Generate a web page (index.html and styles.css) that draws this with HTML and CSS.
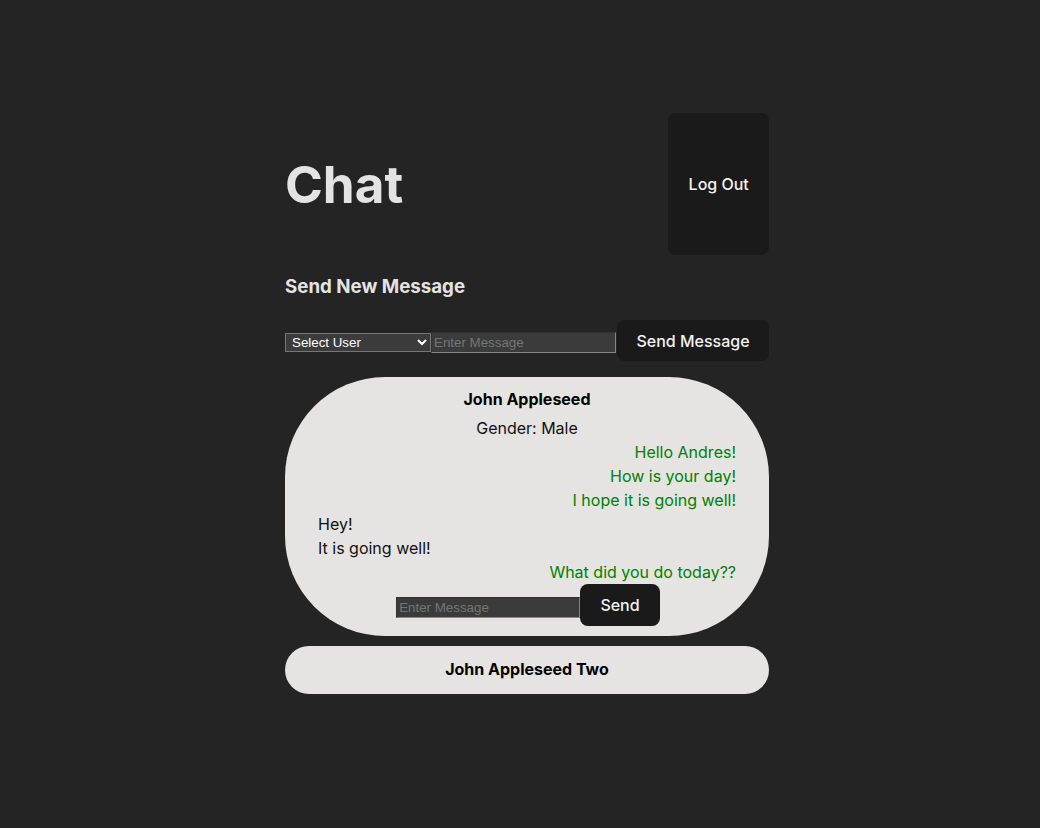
FILE: index.html
```html
<!DOCTYPE html>
<html lang="en">
<head>
<meta charset="utf-8">
<title>Chat</title>
<link rel="stylesheet" href="styles.css">
</head>
<body>
<div class="app">
  <header class="header">
    <h1 class="title">Chat</h1>
    <button class="btn logout">Log Out</button>
  </header>
  <h3 class="subtitle">Send New Message</h3>
  <div class="new-row">
    <select class="select">
      <option>Select User</option>
    </select>
    <input class="input new-input" type="text" placeholder="Enter Message">
    <button class="btn send-new">Send Message</button>
  </div>
  <div class="card open">
    <div class="name">John Appleseed</div>
    <div class="gender">Gender: Male</div>
    <div class="msg mine">Hello Andres!</div>
    <div class="msg mine">How is your day!</div>
    <div class="msg mine">I hope it is going well!</div>
    <div class="msg theirs">Hey!</div>
    <div class="msg theirs">It is going well!</div>
    <div class="msg mine">What did you do today??</div>
    <div class="reply-row">
      <input class="input reply-input" type="text" placeholder="Enter Message">
      <button class="btn send">Send</button>
    </div>
  </div>
  <div class="card closed">
    <div class="name">John Appleseed Two</div>
  </div>
</div>
</body>
</html>
```

FILE: styles.css
```css
html, body {
  margin: 0;
  padding: 0;
  background: #242424;
  color-scheme: dark;
}
body {
  font-family: Inter, "Noto Sans", sans-serif;
  line-height: 1.5;
  color: rgba(255, 255, 255, 0.87);
}
.app {
  width: 484px;
  margin: 0 0 0 285px;
  padding-top: 113px;
}
.header {
  display: flex;
  justify-content: space-between;
  align-items: stretch;
}
.title {
  margin: 43px 0;
  font-size: 51.2px;
  line-height: 1.1;
  font-weight: 700;
  color: #e3e3e3;
}
.btn {
  font-family: Inter, "Noto Sans", sans-serif;
  font-size: 16px;
  font-weight: 500;
  line-height: normal;
  padding: 0.6em 1.2em;
  border: 1px solid transparent;
  border-radius: 8px;
  background: #1a1a1a;
  color: #f2f2f2;
  cursor: pointer;
  white-space: nowrap;
  flex-shrink: 0;
}
.logout {
  display: flex;
  align-items: center;
}
.subtitle {
  margin: 18px 0 19px;
  font-size: 18.72px;
  line-height: 28px;
  font-weight: 700;
  color: #e3e3e3;
}
.new-row {
  display: flex;
  align-items: flex-start;
}
.select {
  width: 146px;
  height: 19px;
  flex-shrink: 0;
  font-family: "Liberation Sans", Arial, sans-serif;
  font-size: 13.33px;
  background: #3b3b3b;
  color: #fff;
  border: 1px solid #767676;
  border-radius: 0;
  padding: 0 0 0 2px;
  margin: 13px 0 0;
}
.input {
  height: 21px;
  box-sizing: border-box;
  flex-shrink: 0;
  font-family: "Liberation Sans", Arial, sans-serif;
  font-size: 13.33px;
  background: #3b3b3b;
  color: #fff;
  border: 1px solid #858585;
  border-style: inset;
  padding: 1px 2px;
  margin: 0;
}
.input::placeholder {
  color: #757575;
}
.new-input {
  width: 185px;
  margin-top: 12px;
}
.send-new {
  margin-left: 1px;
  width: 152px;
  height: 41px;
  padding: 0;
}
.card {
  background: #e5e4e2;
  color: #111;
  border-radius: 100px;
  text-align: center;
}
.open {
  margin-top: 16px;
  padding: 10px 33px 10px;
}
.closed {
  margin-top: 10px;
  padding: 11px 33px 13px;
}
.name {
  font-weight: 700;
  line-height: 24px;
  color: #000;
}
.gender {
  margin-top: 5px;
  line-height: 24px;
}
.msg {
  line-height: 24px;
}
.mine {
  text-align: right;
  color: #008000;
}
.theirs {
  text-align: left;
  color: #111;
}
.reply-row {
  display: flex;
  justify-content: center;
  align-items: flex-start;
  padding-left: 2px;
}
.reply-input {
  width: 184px;
  margin-top: 13px;
}
.send {
  height: 42px;
  padding-top: 0;
  padding-bottom: 0;
}
```
